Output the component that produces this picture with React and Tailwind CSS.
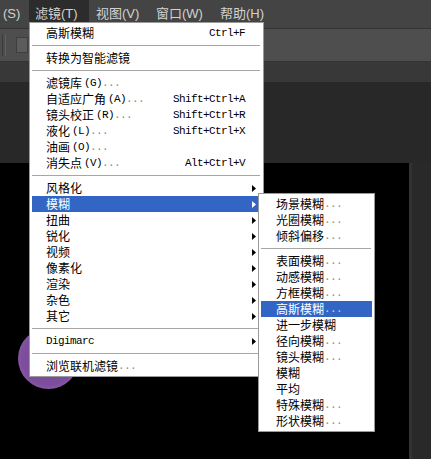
const ZH = { fontFamily: '"Noto Sans CJK SC", "Liberation Sans", sans-serif' };

const mainItems = [
  { zh: "高斯模糊", sc: "Ctrl+F" },
  { sep: true },
  { zh: "转换为智能滤镜" },
  { sep: true },
  { zh: "滤镜库", key: "(G)", dots: true },
  { zh: "自适应广角", key: "(A)", dots: true, sc: "Shift+Ctrl+A" },
  { zh: "镜头校正", key: "(R)", dots: true, sc: "Shift+Ctrl+R" },
  { zh: "液化", key: "(L)", dots: true, sc: "Shift+Ctrl+X" },
  { zh: "油画", key: "(O)", dots: true },
  { zh: "消失点", key: "(V)", dots: true, sc: "Alt+Ctrl+V" },
  { sep: true },
  { zh: "风格化", sub: true },
  { zh: "模糊", sub: true, active: true },
  { zh: "扭曲", sub: true },
  { zh: "锐化", sub: true },
  { zh: "视频", sub: true },
  { zh: "像素化", sub: true },
  { zh: "渲染", sub: true },
  { zh: "杂色", sub: true },
  { zh: "其它", sub: true },
  { sep: true },
  { en: "Digimarc", sub: true },
  { sep: true },
  { zh: "浏览联机滤镜", dots: true },
];

const blurItems = [
  { zh: "场景模糊", dots: true },
  { zh: "光圈模糊", dots: true },
  { zh: "倾斜偏移", dots: true },
  { sep: true },
  { zh: "表面模糊", dots: true },
  { zh: "动感模糊", dots: true },
  { zh: "方框模糊", dots: true },
  { zh: "高斯模糊", dots: true, active: true },
  { zh: "进一步模糊" },
  { zh: "径向模糊", dots: true },
  { zh: "镜头模糊", dots: true },
  { zh: "模糊" },
  { zh: "平均" },
  { zh: "特殊模糊", dots: true },
  { zh: "形状模糊", dots: true },
];

function Mono({ children, className = "" }) {
  return (
    <span className={`text-[11px] tracking-[-0.6px] ${className}`} style={{ fontFamily: '"Liberation Mono", monospace' }}>
      {children}
    </span>
  );
}

function Arrow({ white }) {
  return (
    <svg width="4" height="7" viewBox="0 0 4 7">
      <path d="M0 0 L4 3.5 L0 7 Z" fill={white ? "#ffffff" : "#000000"} />
    </svg>
  );
}

function Label({ item }) {
  return (
    <span className="flex items-center whitespace-nowrap">
      {item.zh ? <span className="text-[12px]" style={ZH}>{item.zh}</span> : null}
      {item.en ? <Mono>{item.en}</Mono> : null}
      {item.key ? <Mono className="ml-[2px]">{item.key}</Mono> : null}
      {item.dots ? <Mono className={item.active ? "text-[#c9d6f0]" : "text-[#8a8a8a]"}>...</Mono> : null}
    </span>
  );
}

function Separator() {
  return (
    <div className="flex h-[9px] items-center pl-[2px] pr-[3px]">
      <div className="h-px w-full bg-[#a6a6a6]" />
    </div>
  );
}

function MainRow({ item }) {
  return (
    <div
      className={`mx-[2px] flex h-[16px] items-center pl-[14px] leading-[16px] ${
        item.active ? "bg-[#3366c4] text-white" : "text-black"
      }`}
    >
      <Label item={item} />
      <div className="flex-1" />
      {item.sc ? <Mono>{item.sc}</Mono> : null}
      <div className="flex w-[16px] justify-end pr-[5px]">{item.sub ? <Arrow white={item.active} /> : null}</div>
    </div>
  );
}

function SubRow({ item }) {
  return (
    <div
      className={`mx-[2px] flex h-[16px] items-center pl-[15px] leading-[16px] ${
        item.active ? "bg-[#3366c4] text-white" : "text-black"
      }`}
    >
      <Label item={item} />
    </div>
  );
}

export default function App() {
  return (
    <div className="relative h-[459px] w-[431px] overflow-hidden bg-black" style={ZH}>
      {/* app menu bar */}
      <div
        className="flex h-[28px] items-start bg-[#444444] text-[13px] text-[#d2d2d2]"
        style={{ fontFamily: '"Liberation Sans", "Noto Sans CJK SC", sans-serif' }}
      >
        <div className="flex h-[27px] w-[29px] items-center pl-[3px]">(S)</div>
        <div className="flex h-[27px] w-[60px] items-center bg-[#2c2c2c] pl-[6px]">滤镜(T)</div>
        <div className="flex h-[27px] w-[60px] items-center pl-[7px]">视图(V)</div>
        <div className="flex h-[27px] w-[64px] items-center pl-[7px]">窗口(W)</div>
        <div className="flex h-[27px] items-center pl-[7px]">帮助(H)</div>
      </div>

      {/* options bar */}
      <div className="flex h-[34px] items-center border-y border-[#343434] bg-[#4e4e4e]">
        <div className="ml-[2px] h-[22px] w-px bg-[#3a3a3a]" />
        <div className="ml-[2px] h-[22px] w-px bg-[#5e5e5e]" />
        <div className="ml-[10px] h-[16px] w-[12px] border border-[#3e3e3e] bg-[#5c5c5c]" />
      </div>
      <div className="h-[20px] bg-[#383838]" />
      <div className="h-[81px] bg-[#282828]" />

      {/* canvas area */}
      <div className="flex h-[296px]">
        <div className="relative w-[409px] bg-black">
          <div className="absolute left-[18px] top-[165px] h-[61px] w-[61px] rounded-full bg-[radial-gradient(circle,#7a4b98_0%,#7d4e9b_62%,#9a6dbb_92%,#8a5ca8_100%)]" />
        </div>
        <div className="flex-1 border-l-[3px] border-[#323232] bg-[#292929]" />
      </div>

      {/* filter menu */}
      <div className="absolute left-[29px] top-[22px] w-[235px] border border-[#9a9a9a] bg-white py-[2px]">
        {mainItems.map((item, i) => (item.sep ? <Separator key={i} /> : <MainRow key={i} item={item} />))}
      </div>

      {/* blur submenu */}
      <div className="absolute left-[258px] top-[193px] w-[117px] border border-[#9a9a9a] bg-white py-[2px]">
        {blurItems.map((item, i) => (item.sep ? <Separator key={i} /> : <SubRow key={i} item={item} />))}
      </div>
    </div>
  );
}
